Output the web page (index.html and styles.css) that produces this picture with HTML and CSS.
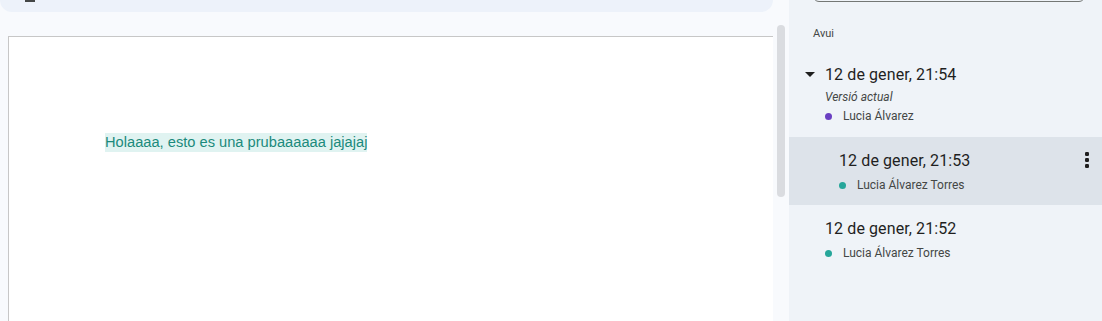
FILE: index.html
```html
<!DOCTYPE html>
<html lang="ca">
<head>
<meta charset="utf-8">
<link rel="stylesheet" href="styles.css">
</head>
<body>
<div class="app">
  <div class="editor">
    <div class="topbar"><span class="topbar-frag"></span></div>
    <div class="main">
      <div class="canvas">
        <div class="page">
          <p class="para"><span class="hl">Holaaaa, esto es una prubaaaaaa jajajaj</span></p>
        </div>
      </div>
      <div class="gutter"><div class="thumb"></div></div>
    </div>
  </div>
  <aside class="history">
    <div class="search"></div>
    <div class="group">Avui</div>
    <div class="entry entry-parent">
      <div class="title-row">
        <svg class="caret" width="10" height="6" viewBox="0 0 10 6"><path d="M0 0h10L5 5z" fill="#1f1f1f"/></svg>
        <span class="title">12 de gener, 21:54</span>
      </div>
      <div class="current">Versió actual</div>
      <div class="author author-tight"><span class="dot dot-purple"></span>Lucia Álvarez</div>
    </div>
    <div class="entry entry-child selected">
      <div class="title">12 de gener, 21:53</div>
      <div class="author"><span class="dot dot-teal"></span>Lucia Álvarez Torres</div>
      <svg class="kebab" width="4" height="16" viewBox="0 0 4 16"><rect x="0" y="0" width="4" height="4" rx="1.2" fill="#1f1f1f"/><rect x="0" y="6" width="4" height="4" rx="1.2" fill="#1f1f1f"/><rect x="0" y="12" width="4" height="4" rx="1.2" fill="#1f1f1f"/></svg>
    </div>
    <div class="entry">
      <div class="title">12 de gener, 21:52</div>
      <div class="author"><span class="dot dot-teal"></span>Lucia Álvarez Torres</div>
    </div>
  </aside>
</div>
</body>
</html>
```

FILE: styles.css
```css
* { box-sizing: border-box; }
html, body { margin: 0; padding: 0; }
body {
  width: 1102px;
  height: 321px;
  overflow: hidden;
  font-family: Roboto, "Liberation Sans", Arial, sans-serif;
  background: #f8fafd;
}
.app {
  display: flex;
  height: 321px;
}
.editor {
  width: 789px;
  flex: none;
  display: flex;
  flex-direction: column;
  background: #f8fafd;
}
.topbar {
  width: 773px;
  height: 12px;
  background: #edf2fa;
  border-radius: 0 0 16px 16px;
  display: flex;
  align-items: flex-start;
}
.topbar-frag {
  margin-left: 25px;
  width: 10px;
  height: 2px;
  background: #444746;
}
.main {
  flex: 1;
  display: flex;
  min-height: 0;
}
.canvas {
  width: 773px;
  padding: 24px 0 0 8px;
  display: flex;
}
.page {
  flex: 1;
  background: #ffffff;
  border-top: 1px solid #c7c7c7;
  border-left: 1px solid #c7c7c7;
  padding: 96px 0 0 96px;
}
.para {
  margin: 0;
  font-family: Arial, "Liberation Sans", sans-serif;
  font-size: 14.667px;
  line-height: 19px;
  color: #1b8a7c;
}
.hl {
  display: inline-block;
  background: #e0f3f1;
}
.gutter {
  width: 16px;
  padding: 13px 0 0 4px;
}
.thumb {
  width: 8px;
  height: 172px;
  background: #dadce0;
  border-radius: 4px;
}
.history {
  flex: 1;
  background: #eff3f8;
  display: flex;
  flex-direction: column;
}
.search {
  height: 32px;
  margin: -30px 17px 0 24px;
  border: 1px solid #747775;
  border-radius: 6px;
  flex: none;
}
.group {
  margin: 24px 0 9px 24px;
  font-size: 11px;
  line-height: 16px;
  color: #444746;
}
.entry {
  position: relative;
  padding: 11px 16px 8px 36px;
}
.entry-parent {
  padding: 11px 16px 13px 16px;
}
.entry-child {
  padding-left: 50px;
}
.selected {
  background: #dde3ea;
}
.title-row {
  display: flex;
  align-items: center;
  gap: 10px;
}
.caret {
  flex: none;
  margin-top: 1px;
}
.title {
  font-size: 16px;
  letter-spacing: 0.1px;
  line-height: 25px;
  color: #1f1f1f;
}
.current {
  padding-left: 20px;
  font-size: 12px;
  font-style: italic;
  line-height: 21px;
  color: #444746;
}
.author {
  display: flex;
  align-items: center;
  gap: 11px;
  font-size: 12px;
  line-height: 24px;
  color: #444746;
}
.author-tight {
  padding-left: 20px;
  line-height: 16px;
}
.dot {
  width: 7px;
  height: 7px;
  border-radius: 50%;
  flex: none;
}
.dot-purple { background: #6a3fc2; }
.dot-teal { background: #26a69a; }
.kebab {
  position: absolute;
  right: 13px;
  top: 15px;
}
```
